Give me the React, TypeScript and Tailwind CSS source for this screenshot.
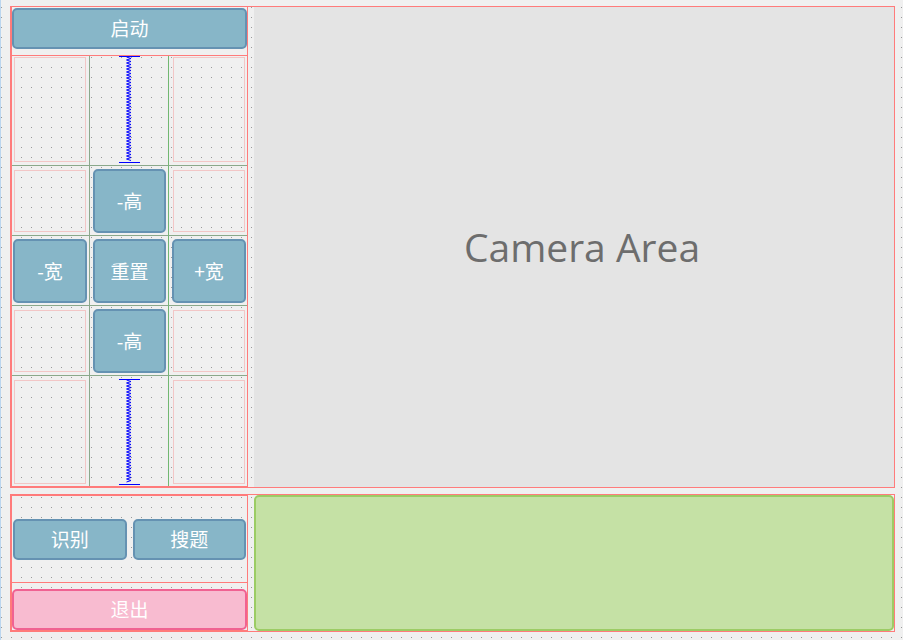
import React from 'react';

const cjk = { fontFamily: '"Noto Sans CJK SC", "Noto Sans", sans-serif' };

const BlueButton: React.FC<{ label: string; className?: string }> = ({ label, className = '' }) => (
  <button
    type="button"
    style={cjk}
    className={`flex items-center justify-center rounded-[5px] border-2 border-[#6592b2] bg-[#87b6c8] text-[19px] font-normal text-white ${className}`}
  >
    {label}
  </button>
);

// empty grid cell marker (light pink outline)
const Placeholder: React.FC = () => <div className="h-full w-full border border-[#f2c6c6]" />;

// vertical spacer drawn as a blue spring with end caps
const Spring: React.FC<{ top: number; bottom: number }> = ({ top, bottom }) => {
  const pts: string[] = [];
  for (let y = top + 1, i = 0; y <= bottom - 1; y += 1.5, i++) {
    pts.push(`${i % 2 === 0 ? 36.5 : 41} ${y}`);
  }
  return (
    <svg width="78" height="110" viewBox="0 0 78 110" className="block">
      <line x1="29" y1={top + 0.5} x2="50" y2={top + 0.5} stroke="#0000ff" strokeWidth="1" />
      <line x1="29" y1={bottom + 0.5} x2="50" y2={bottom + 0.5} stroke="#0000ff" strokeWidth="1" />
      <polyline points={pts.join(' ')} fill="none" stroke="#0000ff" strokeWidth="1" />
    </svg>
  );
};

const App: React.FC = () => {
  return (
    <div className="h-[640px] w-[903px] overflow-hidden border-l border-[#bcd6ef] bg-[#f0f0f0] bg-[linear-gradient(to_right,#f0f0f0_9px,transparent_9px),linear-gradient(to_bottom,#f0f0f0_9px,#9a9a9a_9px)] bg-[length:10px_10px] bg-[position:1px_8px]">
      {/* top row */}
      <div className="ml-[9px] mt-[6px] flex h-[482px] w-[885px] border border-[#ff7b7b]">
        <div className="flex w-[237px] flex-col border-x border-b border-[#ff7b7b]">
          <div className="h-[49px] border-b border-[#ff7b7b] bg-[#f0f0f0] pt-[1px]">
            <BlueButton label="启动" className="h-[41px] w-full" />
          </div>
          <div className="grid grid-cols-[78px_79px_78px] grid-rows-[110px_70px_70px_70px_110px]">
            {/* row 0 */}
            <div className="border-b border-r border-b-[#8aa88a] border-r-[#8ca88c] pb-[3px] pl-[2px] pr-[3px] pt-[1px]"><Placeholder /></div>
            <div className="border-b border-r border-b-[#8aa88a] border-r-[#72b872]"><Spring top={0} bottom={106} /></div>
            <div className="border-b border-b-[#8aa88a] pb-[3px] pl-[4px] pr-[2px] pt-[1px]"><Placeholder /></div>
            {/* row 1 */}
            <div className="border-b border-r border-b-[#8aa88a] border-r-[#8ca88c] pb-[3px] pl-[2px] pr-[3px] pt-[4px]"><Placeholder /></div>
            <div className="border-b border-r border-b-[#8aa88a] border-r-[#72b872] pb-[2px] pl-[3px] pr-[2px] pt-[3px]"><BlueButton label="-高" className="h-full w-full" /></div>
            <div className="border-b border-b-[#8aa88a] pb-[3px] pl-[4px] pr-[2px] pt-[4px]"><Placeholder /></div>
            {/* row 2 */}
            <div className="border-b border-r border-b-[#8aa88a] border-r-[#8ca88c] pb-[2px] pl-[1px] pr-[2px] pt-[3px]"><BlueButton label="-宽" className="h-full w-full" /></div>
            <div className="border-b border-r border-b-[#8aa88a] border-r-[#72b872] pb-[2px] pl-[3px] pr-[2px] pt-[3px]"><BlueButton label="重置" className="h-full w-full" /></div>
            <div className="border-b border-b-[#8aa88a] pb-[2px] pl-[3px] pr-[1px] pt-[3px]"><BlueButton label="+宽" className="h-full w-full" /></div>
            {/* row 3 */}
            <div className="border-b border-r border-b-[#8aa88a] border-r-[#8ca88c] pb-[3px] pl-[2px] pr-[3px] pt-[4px]"><Placeholder /></div>
            <div className="border-b border-r border-b-[#8aa88a] border-r-[#72b872] pb-[2px] pl-[3px] pr-[2px] pt-[3px]"><BlueButton label="-高" className="h-full w-full" /></div>
            <div className="border-b border-b-[#8aa88a] pb-[3px] pl-[4px] pr-[2px] pt-[4px]"><Placeholder /></div>
            {/* row 4 */}
            <div className="border-r border-r-[#8ca88c] pb-[2px] pl-[2px] pr-[3px] pt-[4px]"><Placeholder /></div>
            <div className="border-r border-r-[#72b872]"><Spring top={3} bottom={108} /></div>
            <div className="pb-[2px] pl-[4px] pr-[2px] pt-[4px]"><Placeholder /></div>
          </div>
        </div>
        <div className="w-[6px]" />
        <div className="flex flex-1 items-center justify-center bg-[#e4e4e4] pl-[16px]">
          <span style={{ fontFamily: '"Open Sans", "Noto Sans", sans-serif' }} className="text-[39px] text-[#6d6d6d]">
            Camera Area
          </span>
        </div>
      </div>

      {/* bottom row */}
      <div className="ml-[9px] mt-[6px] flex h-[138px] w-[885px] border border-[#ff7b7b]">
        <div className="flex w-[237px] flex-col border border-[#ff7b7b]">
          <div className="flex h-[87px] items-center gap-[6px] border-b border-[#ff7b7b] px-[1px]">
            <BlueButton label="识别" className="h-[41px] flex-1" />
            <BlueButton label="搜题" className="h-[41px] flex-1" />
          </div>
          <div className="flex-1 pt-[6px]">
            <button
              type="button"
              style={cjk}
              className="flex h-[41px] w-full items-center justify-center rounded-[5px] border-2 border-[#f06292] bg-[#f8bbd0] text-[19px] font-normal text-white"
            >
              退出
            </button>
          </div>
        </div>
        <div className="w-[6px]" />
        <div className="flex-1 rounded-[5px] border-2 border-[#9ccc65] bg-[#c5e1a5]" />
      </div>
    </div>
  );
};

export default App;
